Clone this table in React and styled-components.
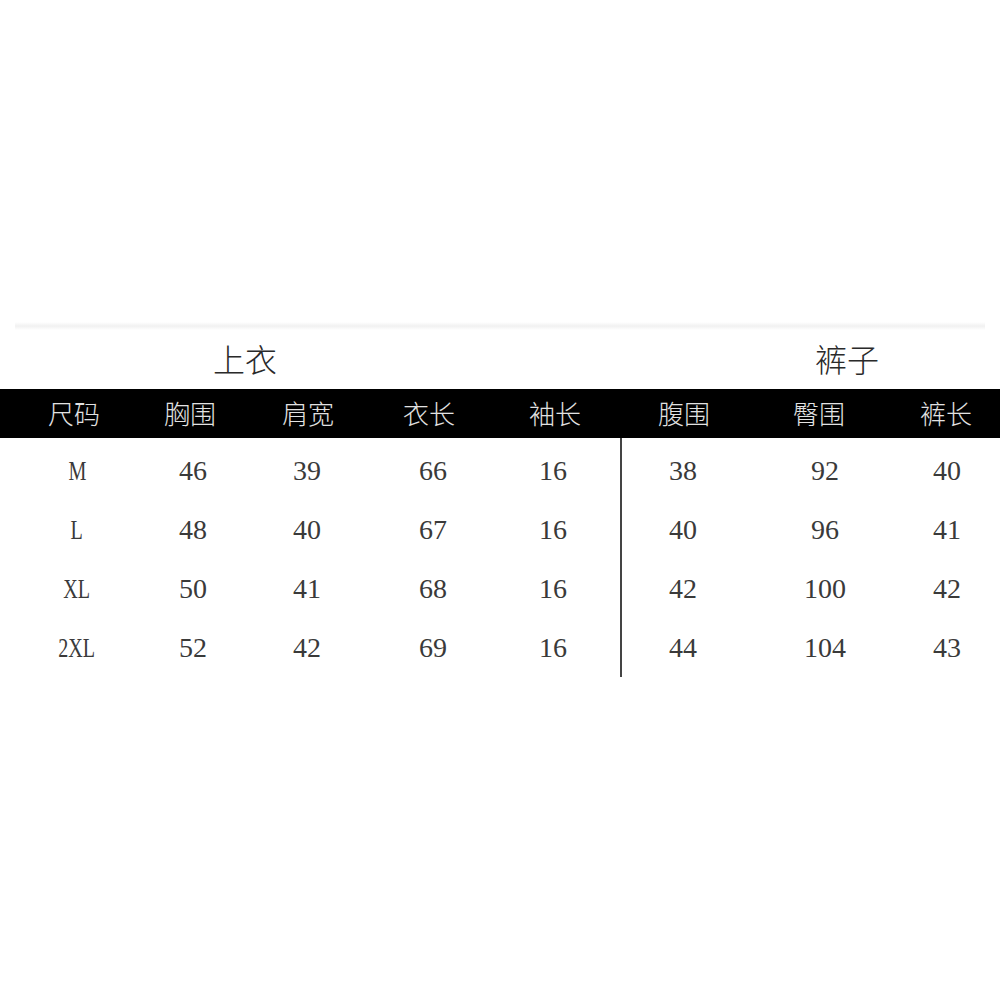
import React from 'react';
import styled, { createGlobalStyle } from 'styled-components';

const LEFT_COLS = '132px 116px 120px 122px 130px';
const RIGHT_COLS = '124px 146px 108px';

// small nudges of the value columns against their headings (px)
const LEFT_SHIFT = [11, 3, -1, 4, -2];
const RIGHT_SHIFT = [-1, 6, 1];

const tops = ['尺码', '胸围', '肩宽', '衣长', '袖长'];
const pants = ['腹围', '臀围', '裤长'];

const rows = [
  { size: 'M', top: [46, 39, 66, 16], pants: [38, 92, 40] },
  { size: 'L', top: [48, 40, 67, 16], pants: [40, 96, 41] },
  { size: 'XL', top: [50, 41, 68, 16], pants: [42, 100, 42] },
  { size: '2XL', top: [52, 42, 69, 16], pants: [44, 104, 43] },
];

function App() {
  return (
    <Page>
      <GlobalStyle />
      <Rule />
      <TitleRow>
        <Title>上衣</Title>
        <span />
        <Title>裤子</Title>
      </TitleRow>
      <HeaderBar>
        <Group $cols={LEFT_COLS}>
          {tops.map((label, i) => (
            <HeadCell key={label} $shift={i === 0 ? 16 : 0}>{label}</HeadCell>
          ))}
        </Group>
        <Group $cols={RIGHT_COLS} $divider="#000">
          {pants.map((label) => (
            <HeadCell key={label} $shift={0}>{label}</HeadCell>
          ))}
        </Group>
      </HeaderBar>
      <Body>
        <Group $cols={LEFT_COLS} $pad>
          {rows.map((row) => (
            <React.Fragment key={row.size}>
              <Cell $shift={LEFT_SHIFT[0]}>
                <SizeLabel>{row.size}</SizeLabel>
              </Cell>
              {row.top.map((v, i) => (
                <Cell key={i} $shift={LEFT_SHIFT[i + 1]}>{v}</Cell>
              ))}
            </React.Fragment>
          ))}
        </Group>
        <Group $cols={RIGHT_COLS} $divider="#444" $pad>
          {rows.map((row) => (
            <React.Fragment key={row.size}>
              {row.pants.map((v, i) => (
                <Cell key={i} $shift={RIGHT_SHIFT[i]}>{v}</Cell>
              ))}
            </React.Fragment>
          ))}
        </Group>
      </Body>
    </Page>
  );
}

const shiftPad = (p) =>
  p.$shift >= 0
    ? `padding-left: ${p.$shift * 2}px;`
    : `padding-right: ${-p.$shift * 2}px;`;

const GlobalStyle = createGlobalStyle`
  html, body {
    margin: 0;
    background: #ffffff;
  }
`

const Page = styled.main`
  width: 1000px;
  height: 1000px;
  padding-top: 322px;
  box-sizing: border-box;
  background: #ffffff;
  font-family: 'Liberation Serif', 'Noto Sans CJK SC', serif;
`

const Rule = styled.div`
  height: 8px;
  margin: 0 15px;
  background: linear-gradient(to bottom, #ffffff, #f1f1f1 50%, #ffffff);
`

const TitleRow = styled.section`
  display: grid;
  grid-template-columns: 490px 1fr 306px;
  align-items: center;
  height: 59px;
  padding-bottom: 4px;
  box-sizing: border-box;
`

const Title = styled.h2`
  margin: 0;
  text-align: center;
  font-family: 'Noto Sans CJK SC', sans-serif;
  font-weight: 300;
  font-size: 32px;
  line-height: 1;
  color: #2a2a2a;
`

const HeaderBar = styled.section`
  display: flex;
  height: 49px;
  background: #000000;
`

const Body = styled.section`
  display: flex;
`

const Group = styled.div`
  display: grid;
  grid-template-columns: ${(p) => p.$cols};
  grid-auto-rows: ${(p) => (p.$pad ? '59px' : '49px')};
  padding-top: ${(p) => (p.$pad ? '3px' : '0')};
  border-left: ${(p) => (p.$divider ? `2px solid ${p.$divider}` : 'none')};
`

const HeadCell = styled.div`
  display: flex;
  align-items: center;
  justify-content: center;
  ${(p) => `padding-left: ${p.$shift}px;`}
  padding-bottom: 2px;
  font-family: 'Noto Sans CJK SC', sans-serif;
  font-weight: 300;
  font-size: 26px;
  color: #e2e2e2;
`

const Cell = styled.div`
  display: flex;
  align-items: center;
  justify-content: center;
  ${shiftPad}
  font-family: 'Liberation Serif', serif;
  font-size: 28px;
  color: #3a3a3a;
`

const SizeLabel = styled.span`
  display: inline-block;
  transform: scaleX(0.72);
`

export default App;
